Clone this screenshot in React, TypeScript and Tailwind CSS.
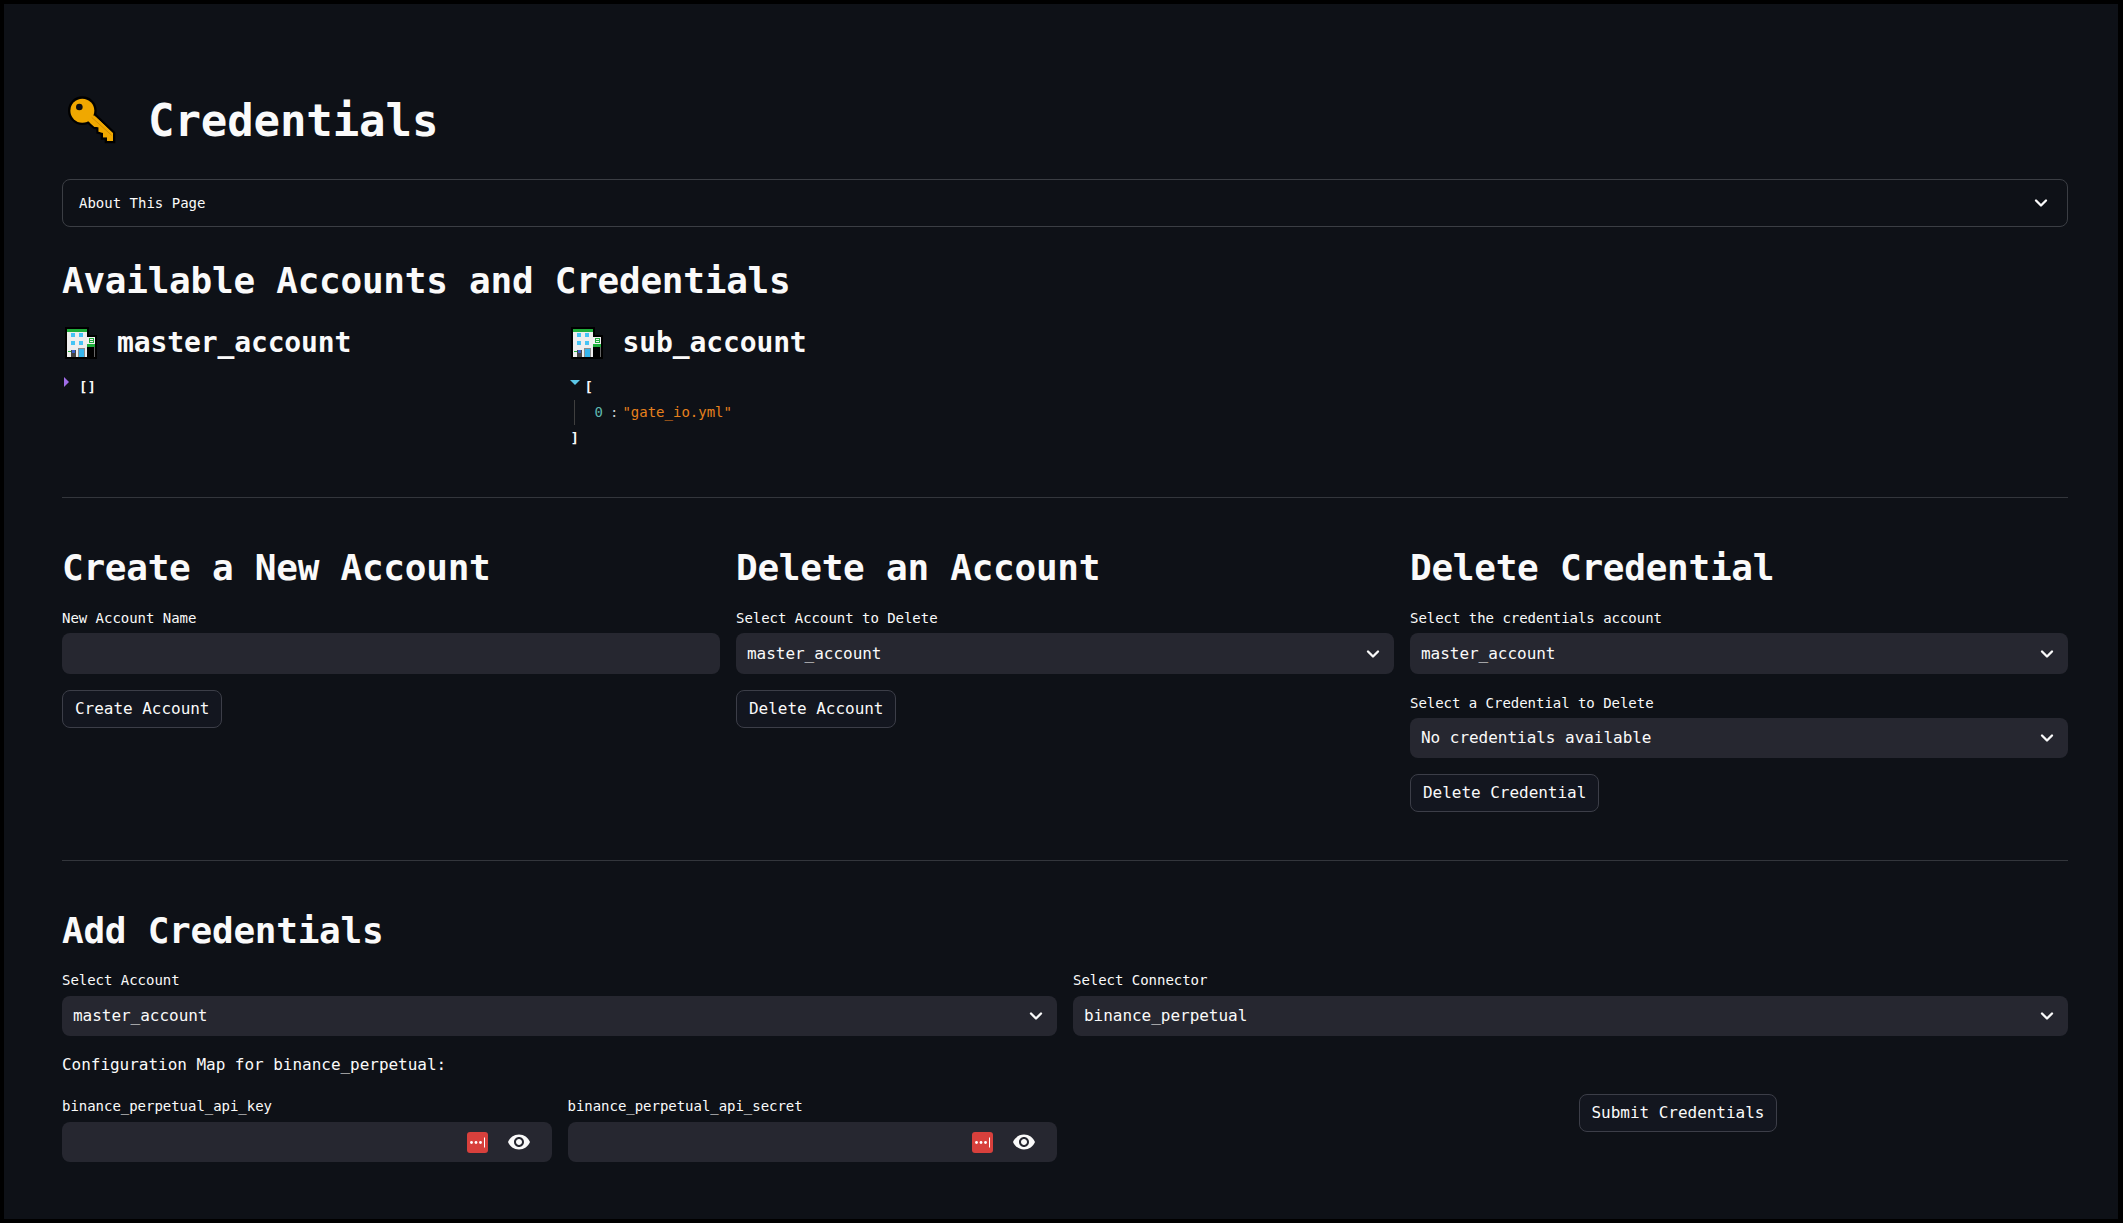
import { MdVisibility } from "react-icons/md";
import { ChevronDown } from "lucide-react";

const heading = "text-[36px] leading-[44px] font-bold text-[#fafafa] tracking-[-0.25px]";
const subheading = "ml-5 text-[28px] leading-8 font-bold text-[#fafafa] tracking-[-0.12px]";
const label = "text-sm leading-5 text-[#fafafa] tracking-[-0.03px]";

function KeyIcon() {
  return (
    <svg width="50" height="50" viewBox="52 45 150 150" className="shrink-0">
      <g stroke="#000" strokeWidth="14" strokeLinejoin="miter" paintOrder="stroke">
        <path d="M118 112 L133 106 L190 160 L190 183 L172 183 L172 172 L160 172 L160 158 L147 155 L147 142 L134 140 L114 122 Z" fill="#f0a800" />
        <circle cx="98" cy="92" r="36" fill="#f0a800" />
      </g>
      <path d="M118 112 L133 106 L190 160 L190 183 L172 183 L172 172 L160 172 L160 158 L147 155 L147 142 L134 140 L114 122 Z" fill="#f0a800" />
      <path d="M126 112 L186 166" stroke="#d08c00" strokeWidth="3" fill="none" />
      <circle cx="89" cy="81" r="10" fill="#0e0e0e" />
    </svg>
  );
}

function BuildingIcon() {
  return (
    <svg width="32" height="32" viewBox="45 18 96 96" shapeRendering="crispEdges" className="shrink-0">
      <rect x="45" y="18" width="72" height="96" fill="#000" />
      <rect x="108" y="42" width="33" height="72" fill="#000" />
      <rect x="52" y="25" width="60" height="83" fill="#eeeeee" />
      <rect x="52" y="25" width="60" height="9" fill="#1fae3c" />
      <rect x="64" y="36" width="12" height="12" fill="#45c4f5" />
      <rect x="87" y="36" width="12" height="12" fill="#45c4f5" />
      <rect x="64" y="60" width="12" height="12" fill="#45c4f5" />
      <rect x="87" y="60" width="12" height="12" fill="#45c4f5" />
      <rect x="84" y="81" width="20" height="27" fill="#8c8c8c" />
      <rect x="87" y="84" width="14" height="24" fill="#36b5ec" />
      <rect x="63" y="87" width="14" height="21" fill="#444" />
      <rect x="66" y="88" width="8" height="8" fill="#3a5fc8" />
      <rect x="54" y="90" width="9" height="3" fill="#1fae3c" />
      <rect x="112" y="48" width="23" height="22" fill="#f2f2f2" />
      <rect x="117" y="52" width="13" height="13" fill="none" stroke="#1fae3c" strokeWidth="3" />
      <rect x="118" y="57" width="11" height="2" fill="#1fae3c" />
      <rect x="112" y="70" width="23" height="8" fill="#1fae3c" />
      <rect x="112" y="78" width="19" height="30" fill="#000" />
      <rect x="131" y="78" width="3" height="30" fill="#666" />
    </svg>
  );
}

function LastPassIcon() {
  return (
    <svg width="21" height="21" viewBox="0 0 21 21">
      <rect x="0" y="0" width="21" height="21" rx="3" fill="#d8403c" />
      <circle cx="4.5" cy="10.5" r="1.4" fill="#fff" />
      <circle cx="9" cy="10.5" r="1.4" fill="#fff" />
      <circle cx="13.5" cy="10.5" r="1.4" fill="#fff" />
      <rect x="17" y="5.5" width="1" height="10" fill="#fff" />
    </svg>
  );
}

function Select({ value, height = "h-10" }: { value: string; height?: string }) {
  return (
    <div className={`${height} pl-[11px] pr-[11px] flex items-center justify-between rounded-lg bg-[#262730] text-base text-[#fafafa] tracking-[-0.03px]`}>
      <span>{value}</span>
      <ChevronDown size={20} strokeWidth={2.8} color="#fafafa" />
    </div>
  );
}

function Button({ children }: { children: React.ReactNode }) {
  return (
    <button className="h-[38px] px-3 rounded-lg border border-[#3c3e48] bg-[#13161f] text-base leading-none text-[#fafafa] tracking-[-0.03px]">
      {children}
    </button>
  );
}

function SecretInput() {
  return (
    <div className="relative h-10 rounded-lg bg-[#262730]">
      <div className="absolute right-[64px] top-[10px] flex">
        <LastPassIcon />
      </div>
      <div className="absolute right-[21px] top-[8px] flex">
        <MdVisibility size={24} color="#fafafa" />
      </div>
    </div>
  );
}

export default function App() {
  return (
    <div className="h-[1223px] bg-black pt-1 pb-1 pl-1 pr-[5px] font-['DejaVu_Sans_Mono','Liberation_Mono',monospace] overflow-hidden">
      <div className="h-full bg-[#0e1117] pl-[58px] pr-[50px] pt-[91px]">
        {/* Title */}
        <div className="flex items-center h-[50px]">
          <div className="ml-[5px] flex">
            <KeyIcon />
          </div>
          <h1 className="ml-[31px] mt-[2px] text-[44px] leading-[50px] font-bold text-[#fafafa] tracking-[-0.1px]">Credentials</h1>
        </div>

        {/* Expander */}
        <div className="mt-[34px] h-[48px] flex items-center justify-between pl-4 pr-4 rounded-lg border border-[#3b3e44] text-sm text-[#fafafa]">
          <span>About This Page</span>
          <ChevronDown size={20} strokeWidth={2.8} color="#fafafa" />
        </div>

        {/* Available accounts */}
        <h2 className={`mt-8 ${heading}`}>Available Accounts and Credentials</h2>
        <div className="mt-6 grid grid-cols-4 gap-4 h-[123px]">
          <div>
            <div className="flex items-center h-8 pl-[3px]">
              <BuildingIcon />
              <span className={subheading}>master_account</span>
            </div>
            <div className="relative mt-4 pl-[17px] text-sm leading-[25px] font-bold text-[#fafafa]">
              <span className="absolute left-[2px] top-[2px] w-0 h-0 border-y-[5px] border-y-transparent border-l-[5px] border-l-[#a06de8]"></span>
              []
            </div>
          </div>
          <div>
            <div className="flex items-center h-8 pl-[3px]">
              <BuildingIcon />
              <span className={subheading}>sub_account</span>
            </div>
            <div className="relative mt-4 text-sm leading-[25px] text-[#fafafa]">
              <span className="absolute left-[2px] top-[5px] w-0 h-0 border-x-[5px] border-x-transparent border-t-[5px] border-t-[#5cc8e8]"></span>
              <div className="pl-[17px] font-bold">[</div>
              <div className="ml-[6px] pl-[20px] border-l border-[#3f3f3f] h-[25px] flex items-center">
                <span className="text-[#5fb8b0]">0</span>
                <span className="ml-[7px] text-[#c9ccd1]">:</span>
                <span className="ml-[4px] text-[#e6801d]">"gate_io.yml"</span>
              </div>
              <div className="mt-px pl-[3px] font-bold">]</div>
            </div>
          </div>
        </div>

        <hr className="mt-[47px] border-t border-[#33363c]" />

        {/* Account management */}
        <div className="mt-12 grid grid-cols-3 gap-4">
          <div>
            <h2 className={heading}>Create a New Account</h2>
            <div className={`mt-[18px] ${label}`}>New Account Name</div>
            <div className="mt-[5px] h-[41px] rounded-lg bg-[#262730]"></div>
            <div className="mt-4">
              <Button>Create Account</Button>
            </div>
          </div>
          <div>
            <h2 className={heading}>Delete an Account</h2>
            <div className={`mt-[18px] ${label}`}>Select Account to Delete</div>
            <div className="mt-[5px]">
              <Select value="master_account" height="h-[41px]" />
            </div>
            <div className="mt-4">
              <Button>Delete Account</Button>
            </div>
          </div>
          <div>
            <h2 className={heading}>Delete Credential</h2>
            <div className={`mt-[18px] ${label}`}>Select the credentials account</div>
            <div className="mt-[5px]">
              <Select value="master_account" height="h-[41px]" />
            </div>
            <div className={`mt-[19px] ${label}`}>Select a Credential to Delete</div>
            <div className="mt-[5px]">
              <Select value="No credentials available" />
            </div>
            <div className="mt-4">
              <Button>Delete Credential</Button>
            </div>
          </div>
        </div>

        <hr className="mt-12 border-t border-[#33363c]" />

        {/* Add credentials */}
        <h2 className={`mt-12 ${heading}`}>Add Credentials</h2>
        <div className="mt-[17px] grid grid-cols-2 gap-4">
          <div>
            <div className={label}>Select Account</div>
            <div className="mt-[6px]">
              <Select value="master_account" />
            </div>
          </div>
          <div>
            <div className={label}>Select Connector</div>
            <div className="mt-[6px]">
              <Select value="binance_perpetual" />
            </div>
          </div>
        </div>
        <div className="mt-[17px] text-base leading-6 text-[#fafafa] tracking-[-0.03px]">Configuration Map for binance_perpetual:</div>
        <div className="mt-4 grid grid-cols-4 gap-4">
          <div className="pt-[3px]">
            <div className={label}>binance_perpetual_api_key</div>
            <div className="mt-[6px]">
              <SecretInput />
            </div>
          </div>
          <div className="pt-[3px]">
            <div className={label}>binance_perpetual_api_secret</div>
            <div className="mt-[6px]">
              <SecretInput />
            </div>
          </div>
          <div></div>
          <div className="pt-px">
            <Button>Submit Credentials</Button>
          </div>
        </div>
      </div>
    </div>
  );
}
